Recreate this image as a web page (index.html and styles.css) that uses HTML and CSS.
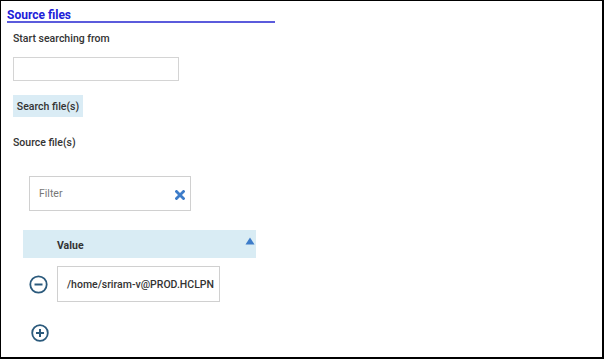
FILE: index.html
```html
<!DOCTYPE html>
<html>
<head>
<meta charset="utf-8">
<link rel="stylesheet" href="styles.css">
</head>
<body>
<div class="frame">
  <h2 class="section-title">Source files</h2>
  <div class="field">
    <div class="label">Start searching from</div>
    <input class="text-input" type="text">
  </div>
  <button class="btn">Search file(s)</button>
  <div class="label label-files">Source file(s)</div>
  <div class="filter">
    <span class="filter-ph">Filter</span>
    <svg class="filter-x" width="10" height="10" viewBox="0 0 10 10"><path d="M1.5 1.5 L8.5 8.5 M8.5 1.5 L1.5 8.5" stroke="#3d7cc9" stroke-width="2.8" stroke-linecap="square"/></svg>
  </div>
  <div class="grid-head">
    <span class="col-title">Value</span>
    <svg class="sort" width="10" height="8" viewBox="0 0 10 8"><path d="M5 0.5 L9.5 7.5 L0.5 7.5 Z" fill="#3d7cc9"/></svg>
  </div>
  <div class="row">
    <svg class="round-btn" width="19" height="19" viewBox="0 0 19 19"><circle cx="9.5" cy="9.5" r="8.2" fill="none" stroke="#2b5a7c" stroke-width="1.8"/><path d="M5.5 9.5 H13.5" stroke="#2b5a7c" stroke-width="2"/></svg>
    <div class="value-box">/home/sriram-v@PROD.HCLPN</div>
  </div>
  <div class="add-row">
    <svg class="round-btn" width="18" height="18" viewBox="0 0 18 18"><circle cx="9" cy="9" r="7.8" fill="none" stroke="#2b5a7c" stroke-width="1.8"/><path d="M5 9 H13 M9 5 V13" stroke="#2b5a7c" stroke-width="2"/></svg>
  </div>
</div>
</body>
</html>
```
FILE: styles.css
```css
* { box-sizing: border-box; }
html, body { margin: 0; padding: 0; background: #fff; }
body { font-family: Roboto, "Liberation Sans", Arial, sans-serif; color: #333; }
.frame {
  width: 604px;
  height: 359px;
  border-left: 1px solid #000;
  border-top: 1px solid #000;
  border-right: 2px solid #000;
  border-bottom: 2px solid #000;
  padding: 9px 0 0 6px;
  overflow: hidden;
}
.section-title {
  margin: 0;
  width: 268px;
  font-size: 12px;
  font-weight: 700;
  line-height: 11px;
  color: #2020d8;
  border-bottom: 2px solid #5b5bdc;
  padding-bottom: 0;
}
.field { padding-left: 6px; }
.label {
  font-size: 10.5px;
  font-weight: 500;
  color: #333;
  line-height: 13px;
  margin-top: 9px;
}
.text-input {
  display: block;
  margin-top: 12px;
  width: 166px;
  height: 24px;
  border: 1.5px solid #d4d4d4;
  background: #fff;
  outline: none;
}
.btn {
  display: block;
  margin: 14px 0 0 6px;
  width: 70px;
  height: 22px;
  padding: 0;
  border: none;
  background: #daecf5;
  font-family: inherit;
  font-size: 10.5px;
  font-weight: 500;
  color: #333;
}
.label-files { margin-left: 6px; margin-top: 19px; }
.filter {
  margin: 27px 0 0 22px;
  width: 162px;
  height: 35px;
  border: 1px solid #d0d0d0;
  display: flex;
  align-items: center;
  justify-content: space-between;
  padding: 0 5px 0 9px;
}
.filter-ph { font-size: 10.5px; color: #777; }
.filter-x { margin-top: 2px; }
.grid-head {
  margin: 19px 0 0 16px;
  width: 233px;
  height: 28px;
  background: #d9ecf4;
  display: flex;
  align-items: center;
  justify-content: space-between;
  padding: 0 1px 0 34px;
}
.col-title { font-size: 10.5px; font-weight: 700; color: #333; margin-top: 2px; }
.sort { margin-top: -6px; }
.row {
  display: flex;
  align-items: center;
  margin: 8px 0 0 22px;
  gap: 9px;
}
.value-box {
  width: 163px;
  height: 36px;
  border: 1px solid #d0d0d0;
  display: flex;
  align-items: center;
  padding-left: 9px;
  font-size: 10.5px;
  color: #333;
  font-weight: 500;
  white-space: nowrap;
}
.add-row { margin: 22px 0 0 24px; }
.round-btn { display: block; }
```
